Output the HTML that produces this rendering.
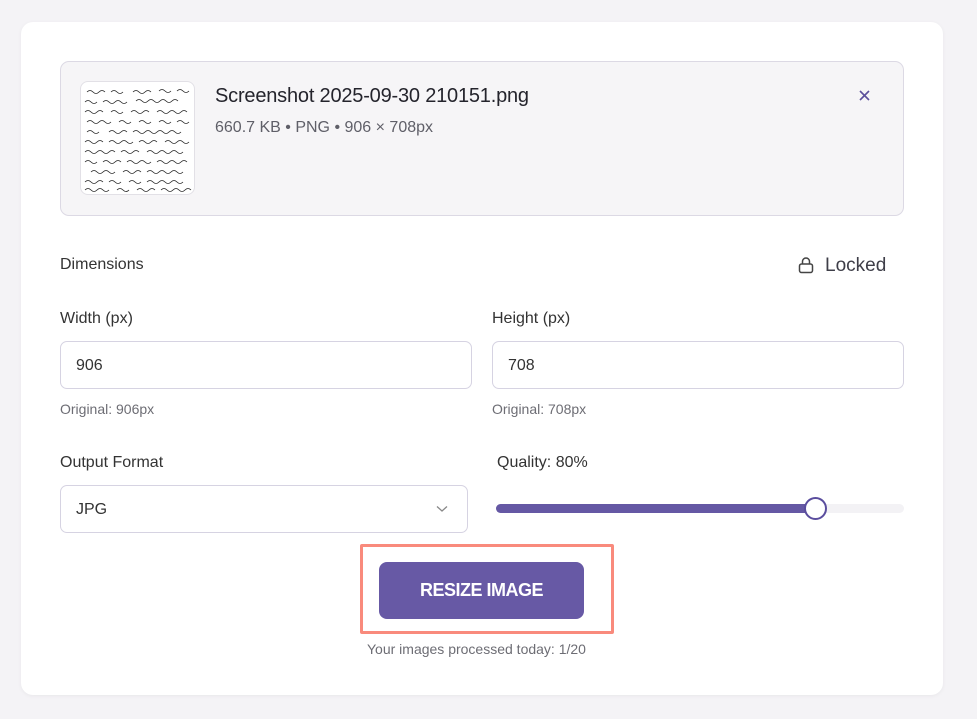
<!DOCTYPE html>
<html><head><style>
*{box-sizing:border-box;margin:0;padding:0}
body{width:977px;height:719px;background:#f4f3f6;font-family:"Liberation Sans",sans-serif;position:relative;overflow:hidden;color:#2b2b33}
.card{position:absolute;left:21px;top:22px;width:922px;height:673px;background:#fff;border-radius:12px;box-shadow:0 1px 4px rgba(0,0,0,.05)}
.file{position:absolute;left:60px;top:61px;width:844px;height:155px;background:#f6f5f7;border:1px solid #dcd9e4;border-radius:9px}
.thumb{position:absolute;left:80px;top:81px;width:115px;height:114px;background:#fff;border:1px solid #e2e0e6;border-radius:8px;overflow:hidden}
.abs{position:absolute;white-space:nowrap}
.inp{position:absolute;height:48px;border:1px solid #d6d3e2;border-radius:7px;background:#fff;font-size:16px;padding-left:15px;line-height:48px;color:#333}
.lbl{font-size:16px;color:#333}
.small{font-size:14px;color:#6d6d74}
</style></head><body>
<div class="card"></div>
<div class="file"></div>
<div class="thumb">
<svg width="115" height="114" viewBox="0 0 115 114">
<g stroke="#222" stroke-width="0.8" fill="none">
<path d="M6 10 q3 -3 6 0 t6 0 t6 0 M30 10 q3 -3 6 0 t6 0 M52 10 q3-3 6 0 t6 0 t6 0 M78 9 q3-3 6 0 t6 0 M96 9 q3-3 6 0 t6 0"/>
<path d="M4 20 q3 -3 6 0 t6 0 M22 20 q3-3 6 0 t6 0 t6 0 t6 0 M55 19 q3-3 6 0 t6 0 t6 0 t6 0 t6 0 t6 0 t6 0"/>
<path d="M4 30 q3 -3 6 0 t6 0 t6 0 M30 30 q3-3 6 0 t6 0 M50 30 q3-3 6 0 t6 0 t6 0 M76 30 q3-3 6 0 t6 0 t6 0 t6 0 t6 0"/>
<path d="M6 40 q3 -3 6 0 t6 0 t6 0 t6 0 M38 40 q3-3 6 0 t6 0 M58 40 q3-3 6 0 t6 0 M78 40 q3-3 6 0 t6 0 M96 40 q3-3 6 0 t6 0"/>
<path d="M6 50 q3 -3 6 0 t6 0 M28 50 q3-3 6 0 t6 0 t6 0 M52 50 q3-3 6 0 t6 0 t6 0 t6 0 t6 0 t6 0 t6 0 t6 0"/>
<path d="M4 60 q3 -3 6 0 t6 0 t6 0 M28 60 q3-3 6 0 t6 0 t6 0 t6 0 M58 60 q3-3 6 0 t6 0 t6 0 M84 60 q3-3 6 0 t6 0 t6 0 t6 0"/>
<path d="M4 70 q3 -3 6 0 t6 0 t6 0 t6 0 t6 0 M40 70 q3-3 6 0 t6 0 t6 0 M66 70 q3-3 6 0 t6 0 t6 0 t6 0 t6 0 t6 0"/>
<path d="M4 80 q3 -3 6 0 t6 0 M22 80 q3-3 6 0 t6 0 t6 0 M46 80 q3-3 6 0 t6 0 t6 0 t6 0 M76 80 q3-3 6 0 t6 0 t6 0 t6 0 t6 0"/>
<path d="M10 90 q3 -3 6 0 t6 0 t6 0 t6 0 M42 90 q3-3 6 0 t6 0 t6 0 M66 90 q3-3 6 0 t6 0 t6 0 t6 0 t6 0 t6 0"/>
<path d="M4 100 q3 -3 6 0 t6 0 t6 0 M28 100 q3-3 6 0 t6 0 M48 100 q3-3 6 0 t6 0 M66 100 q3-3 6 0 t6 0 t6 0 t6 0 t6 0 t6 0"/>
<path d="M4 108 q3 -3 6 0 t6 0 t6 0 t6 0 M36 108 q3-3 6 0 t6 0 M56 108 q3-3 6 0 t6 0 t6 0 M80 108 q3-3 6 0 t6 0 t6 0 t6 0 t6 0"/>
</g></svg></div>
<div class="abs" style="left:215px;top:85px;font-size:20px;color:#24242c;letter-spacing:-0.2px">Screenshot 2025-09-30 210151.png</div>
<div class="abs" style="left:215px;top:119px;font-size:16px;color:#5f5f68">660.7 KB • PNG • 906 × 708px</div>
<svg class="abs" style="left:858px;top:89px" width="13" height="13" viewBox="0 0 13 13"><path d="M2 2L11 11M11 2L2 11" stroke="#5b4f9c" stroke-width="1.6"/></svg>

<div class="abs lbl" style="left:60px;top:256px">Dimensions</div>
<svg class="abs" style="left:797px;top:256px" width="18" height="18" viewBox="0 0 18 18"><rect x="2.5" y="8" width="13" height="8.5" rx="2" fill="none" stroke="#444" stroke-width="1.5"/><path d="M5.5 8V5.5a3.5 3.5 0 0 1 7 0V8" fill="none" stroke="#444" stroke-width="1.5"/></svg>
<div class="abs" style="left:825px;top:255px;font-size:19px;color:#3e3e48">Locked</div>

<div class="abs lbl" style="left:60px;top:310px">Width (px)</div>
<div class="abs lbl" style="left:492px;top:310px">Height (px)</div>
<div class="inp" style="left:60px;top:341px;width:412px">906</div>
<div class="inp" style="left:492px;top:341px;width:412px">708</div>
<div class="abs small" style="left:60px;top:401px">Original: 906px</div>
<div class="abs small" style="left:492px;top:401px">Original: 708px</div>

<div class="abs lbl" style="left:60px;top:454px">Output Format</div>
<div class="abs lbl" style="left:497px;top:454px">Quality: 80%</div>
<div class="inp" style="left:60px;top:485px;width:408px">JPG</div>
<svg class="abs" style="left:436px;top:505px" width="12" height="8" viewBox="0 0 12 8"><path d="M1 1.5L6 6L11 1.5" fill="none" stroke="#888" stroke-width="1.3"/></svg>

<div class="abs" style="left:496px;top:504px;width:408px;height:9px;background:#f3f2f5;border-radius:5px"></div>
<div class="abs" style="left:496px;top:504px;width:320px;height:9px;background:#6558a4;border-radius:5px"></div>
<div class="abs" style="left:804px;top:497px;width:23px;height:23px;background:#fff;border:2px solid #5a4d9e;border-radius:50%"></div>

<div class="abs" style="left:360px;top:544px;width:254px;height:90px;border:3px solid #f98a7c;border-radius:2px"></div>
<div class="abs" style="left:379px;top:562px;width:205px;height:57px;background:#6759a5;border-radius:8px;color:#fff;font-size:18px;font-weight:bold;text-align:center;line-height:57px;letter-spacing:-0.5px">RESIZE IMAGE</div>
<div class="abs small" style="left:367px;top:641px;font-size:14px">Your images processed today: 1/20</div>
</body></html>
